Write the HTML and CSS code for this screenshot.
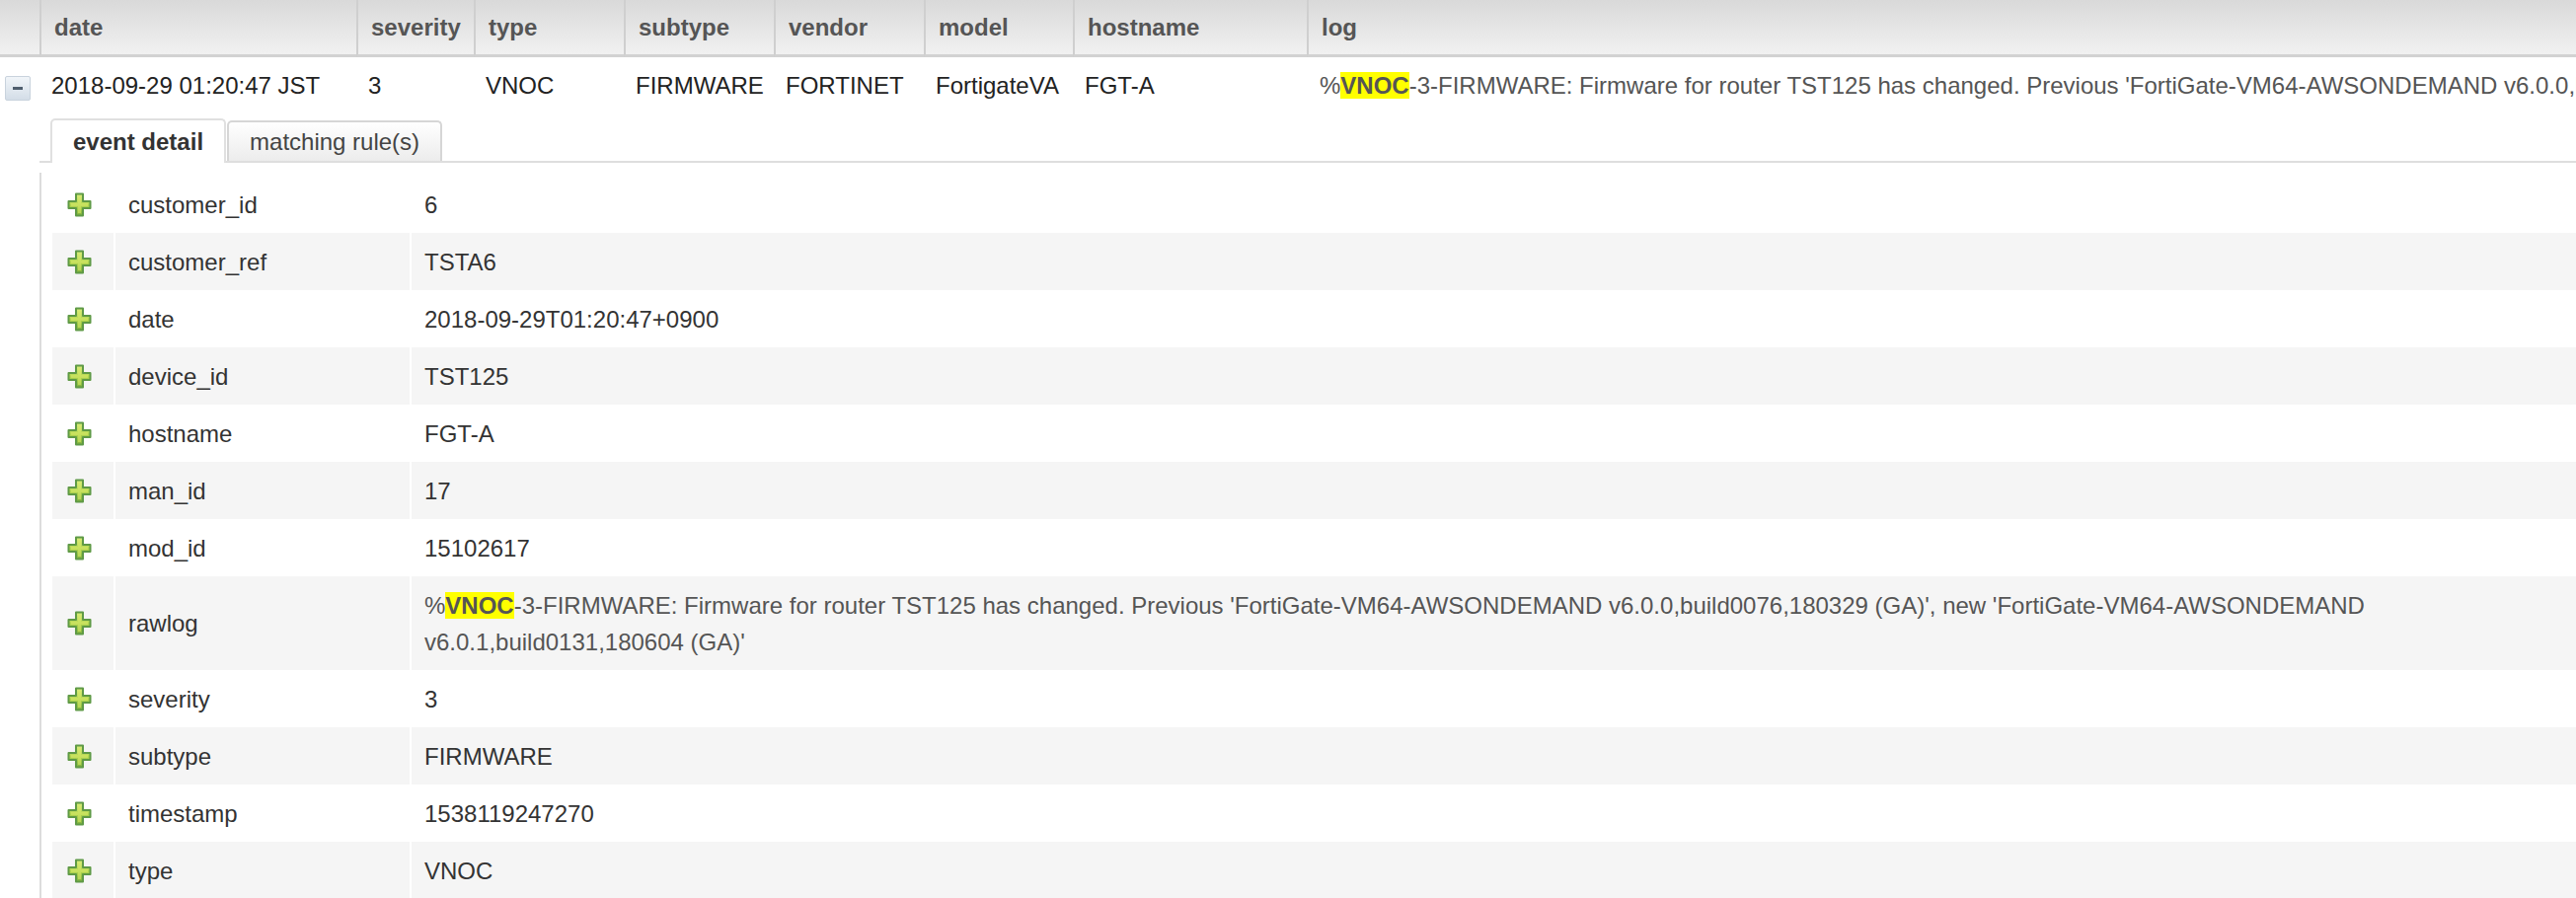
FILE: index.html
```html
<!DOCTYPE html>
<html>
<head>
<meta charset="utf-8">
<title>Events</title>
<link rel="stylesheet" href="styles.css">
</head>
<body>
<table class="grid">
  <colgroup>
    <col class="c-exp">
    <col class="c-date">
    <col class="c-sev">
    <col class="c-type">
    <col class="c-sub">
    <col class="c-vendor">
    <col class="c-model">
    <col class="c-host">
    <col class="c-log">
  </colgroup>
  <thead>
    <tr>
      <th class="exp"></th>
      <th>date</th>
      <th>severity</th>
      <th>type</th>
      <th>subtype</th>
      <th>vendor</th>
      <th>model</th>
      <th>hostname</th>
      <th>log</th>
    </tr>
  </thead>
  <tbody>
    <tr class="row">
      <td class="exp"><span class="minus-btn"><span class="bar"></span></span></td>
      <td>2018-09-29 01:20:47 JST</td>
      <td>3</td>
      <td>VNOC</td>
      <td>FIRMWARE</td>
      <td>FORTINET</td>
      <td>FortigateVA</td>
      <td>FGT-A</td>
      <td class="log">%<b class="hl">VNOC</b>-3-FIRMWARE: Firmware for router TST125 has changed. Previous 'FortiGate-VM64-AWSONDEMAND v6.0.0,build0076,180329 (GA)', new 'FortiGate-VM64-AWSONDEMAND v6.0.1,build0131,180604 (GA)'</td>
    </tr>
    <tr class="sub">
      <td class="exp"></td>
      <td colspan="8" class="sub-cell">
        <div class="tabs">
          <div class="tab active">event detail</div>
          <div class="tab">matching rule(s)</div>
        </div>
        <div class="detail">
          <table class="kv">
            <colgroup>
              <col class="k-icon">
              <col class="k-key">
              <col class="k-val">
            </colgroup>
            <tbody>
              <tr><td class="ic"><svg class="plus" viewBox="0 0 25 25"><use href="#plus"/></svg></td><td>customer_id</td><td>6</td></tr>
              <tr><td class="ic"><svg class="plus" viewBox="0 0 25 25"><use href="#plus"/></svg></td><td>customer_ref</td><td>TSTA6</td></tr>
              <tr><td class="ic"><svg class="plus" viewBox="0 0 25 25"><use href="#plus"/></svg></td><td>date</td><td>2018-09-29T01:20:47+0900</td></tr>
              <tr><td class="ic"><svg class="plus" viewBox="0 0 25 25"><use href="#plus"/></svg></td><td>device_id</td><td>TST125</td></tr>
              <tr><td class="ic"><svg class="plus" viewBox="0 0 25 25"><use href="#plus"/></svg></td><td>hostname</td><td>FGT-A</td></tr>
              <tr><td class="ic"><svg class="plus" viewBox="0 0 25 25"><use href="#plus"/></svg></td><td>man_id</td><td>17</td></tr>
              <tr><td class="ic"><svg class="plus" viewBox="0 0 25 25"><use href="#plus"/></svg></td><td>mod_id</td><td>15102617</td></tr>
              <tr><td class="ic"><svg class="plus" viewBox="0 0 25 25"><use href="#plus"/></svg></td><td>rawlog</td><td class="raw">%<b class="hl">VNOC</b>-3-FIRMWARE: Firmware for router TST125 has changed. Previous 'FortiGate-VM64-AWSONDEMAND v6.0.0,build0076,180329 (GA)', new 'FortiGate-VM64-AWSONDEMAND v6.0.1,build0131,180604 (GA)'</td></tr>
              <tr><td class="ic"><svg class="plus" viewBox="0 0 25 25"><use href="#plus"/></svg></td><td>severity</td><td>3</td></tr>
              <tr><td class="ic"><svg class="plus" viewBox="0 0 25 25"><use href="#plus"/></svg></td><td>subtype</td><td>FIRMWARE</td></tr>
              <tr><td class="ic"><svg class="plus" viewBox="0 0 25 25"><use href="#plus"/></svg></td><td>timestamp</td><td>1538119247270</td></tr>
              <tr><td class="ic"><svg class="plus" viewBox="0 0 25 25"><use href="#plus"/></svg></td><td>type</td><td>VNOC</td></tr>
            </tbody>
          </table>
        </div>
      </td>
    </tr>
  </tbody>
</table>

<svg class="defs" width="0" height="0">
  <defs>
    <linearGradient id="pg" x1="0" y1="0" x2="0" y2="1">
      <stop offset="0" stop-color="#d9ec7a"/>
      <stop offset="0.5" stop-color="#b3d74f"/>
      <stop offset="1" stop-color="#7fb23c"/>
    </linearGradient>
    <g id="plus">
      <path d="M9 1.5 H16 V9 H23.5 V16 H16 V23.5 H9 V16 H1.5 V9 H9 Z" fill="url(#pg)" stroke="#5f9a46" stroke-width="2" stroke-linejoin="round"/>
      <path d="M11 4 H14 V11 H21 V14 H14 V21 H11 V14 H4 V11 H11 Z" fill="#d8ea6c" opacity="0.55"/>
    </g>
  </defs>
</svg>
</body>
</html>
```

FILE: styles.css
```css
* { box-sizing: border-box; }

html, body {
  margin: 0;
  padding: 0;
  background: #ffffff;
  overflow: hidden;
}

body {
  width: 2610px;
  font-family: "Liberation Sans", Arial, Helvetica, sans-serif;
  font-size: 24px;
  color: #222;
}

.defs { position: absolute; width: 0; height: 0; }

.grid {
  width: 2610px;
  table-layout: fixed;
  border-collapse: separate;
  border-spacing: 0;
}

.c-exp { width: 40px; }
.c-date { width: 321px; }
.c-sev { width: 119px; }
.c-type { width: 152px; }
.c-sub { width: 152px; }
.c-vendor { width: 152px; }
.c-model { width: 151px; }
.c-host { width: 237px; }
.c-log { width: 1286px; }

.grid th {
  height: 58px;
  padding: 0 0 0 13px;
  text-align: left;
  font-weight: bold;
  color: #555;
  background: linear-gradient(#d9d9d9, #f1f1f1);
  border-left: 2px solid #cfcfcf;
  border-bottom: 3px solid #d2d2d2;
  white-space: nowrap;
  overflow: hidden;
}

.grid th.exp { border-left: none; padding: 0; }

.row td {
  height: 58px;
  padding: 0 0 0 12px;
  white-space: nowrap;
  overflow: hidden;
  color: #222;
}

.row td.exp { padding: 0 0 0 5px; vertical-align: middle; }

.row td.log { color: #555; padding-left: 13px; }

.minus-btn {
  display: flex;
  align-items: center;
  justify-content: center;
  width: 26px;
  height: 25px;
  margin-top: 4px;
  border: 1px solid #c9d3dd;
  border-radius: 2px;
  background: linear-gradient(#f1f5f9, #d3dde7);
}

.minus-btn .bar {
  width: 10px;
  height: 3px;
  background: #4f5e6d;
}

.hl {
  background: #ffff00;
  font-weight: bold;
}

.sub td.exp { padding: 0; }

.sub-cell { padding: 0; vertical-align: top; }

.tabs {
  display: flex;
  align-items: flex-end;
  gap: 1px;
  padding: 4px 0 0 11px;
  border-bottom: 2px solid #dedede;
  height: 49px;
}

.tab {
  height: 41px;
  padding: 0 21px;
  display: flex;
  align-items: center;
  border: 2px solid #d6d6d6;
  border-bottom: none;
  border-radius: 5px 5px 0 0;
  background: linear-gradient(#ffffff, #ececec);
  color: #444;
  white-space: nowrap;
}

.tab.active {
  height: 45px;
  margin-bottom: -2px;
  background: #ffffff;
  border-color: #e0e0e0;
  font-weight: bold;
  color: #333;
}

.detail {
  margin-top: 10px;
  border-left: 2px solid #dcdcdc;
  padding: 3px 0 0 11px;
}

.kv {
  width: 2557px;
  table-layout: fixed;
  border-collapse: separate;
  border-spacing: 0;
}

.k-icon { width: 62px; }
.k-key { width: 300px; }
.k-val { width: 2195px; }

.kv td {
  padding: 10.5px 13px;
  line-height: 37px;
  color: #333;
  vertical-align: middle;
}

.kv td + td { border-left: 2px solid #ffffff; }

.kv tr:nth-child(even) td { background: #f5f5f5; }

.kv td.ic { padding: 0 0 0 15px; }

.kv td.raw { color: #555; }

.plus {
  display: block;
  width: 25px;
  height: 25px;
}
```
